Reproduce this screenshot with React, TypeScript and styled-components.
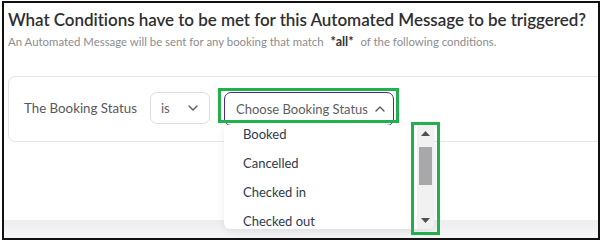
import React from "react";
import styled, { createGlobalStyle } from "styled-components";

const Global = createGlobalStyle`
  html, body { margin: 0; padding: 0; background: #ffffff; }
  body { font-family: "Lato", "Open Sans", sans-serif; }
  * { box-sizing: border-box; }
`;

const Frame = styled.div`
  position: relative;
  margin: 1px 0 0 2px;
  width: 598px;
  height: 239px;
  border: 2px solid #111;
  overflow: hidden;
  display: flex;
  flex-direction: column;
  background: #fff;
`;

const Header = styled.div`
  padding: 6px 0 0 4px;
  display: flex;
  flex-direction: column;
  gap: 4px;
`;

const Title = styled.h1`
  margin: 0;
  font-size: 17px;
  line-height: 22px;
  font-weight: 600;
  color: #2f2f33;
  white-space: nowrap;
  letter-spacing: -0.05px;
`;

const Subtitle = styled.p`
  margin: 0;
  font-size: 11.4px;
  line-height: 14px;
  color: #8c8c90;
  white-space: nowrap;
`;

const Strong = styled.b`
  color: #333;
  font-weight: 700;
  font-size: 12.5px;
  margin: 0 4px;
`;

const Card = styled.div`
  margin: 27px 0 0 4px;
  width: 640px;
  height: 66px;
  border: 1px solid #e6e6e8;
  border-radius: 7px;
  padding: 15px 0 0 15px;
  display: flex;
  align-items: flex-start;
`;

const Label = styled.span`
  font-size: 13.3px;
  line-height: 32px;
  color: #58585c;
  margin-right: 13px;
`;

const SelectBox = styled.div<{ $w: number; $active?: boolean }>`
  width: ${(p) => p.$w}px;
  height: ${(p) => (p.$active ? 34 : 32)}px;
  border: 1px solid ${(p) => (p.$active ? "#4b2a8c" : "#dedee2")};
  border-radius: 7px;
  display: flex;
  align-items: center;
  justify-content: space-between;
  padding: 0 ${(p) => (p.$active ? 8 : 11)}px 0 ${(p) => (p.$active ? 11 : 10)}px;
  font-size: 13px;
  color: #5e5e62;
  background: #fff;
`;

const SelectWrap = styled.div`
  position: relative;
  margin-left: 14px;
`;

const Menu = styled.div`
  position: absolute;
  top: 33px;
  left: 0;
  width: 210px;
  height: 104px;
  background: #fff;
  border-radius: 0 0 6px 6px;
  box-shadow: 0 3px 8px rgba(0, 0, 0, 0.08);
  overflow: hidden;
  z-index: 2;
`;

const List = styled.ul`
  list-style: none;
  margin: -5px 0 0 0;
  padding: 0;
`;

const Item = styled.li`
  height: 29px;
  line-height: 29px;
  padding-left: 19px;
  font-size: 13px;
  color: #2f3b4e;
`;

const Track = styled.div`
  position: absolute;
  top: 0;
  right: 0;
  width: 17px;
  height: 100%;
  background: #f1f1f2;
  display: flex;
  flex-direction: column;
  align-items: center;
`;

const ArrowBtn = styled.div`
  height: 17px;
  width: 17px;
  display: flex;
  align-items: center;
  justify-content: center;
`;

const Thumb = styled.div`
  margin-top: 5px;
  width: 13px;
  height: 38px;
  background: #a8a8aa;
`;

const Spacer = styled.div`
  flex: 1;
`;

const Band = styled.div`
  height: 18px;
  background: linear-gradient(#ededef, #f6f6f8);
`;

const Highlight = styled.div<{ $l: number; $t: number; $w: number; $h: number }>`
  position: absolute;
  left: ${(p) => p.$l}px;
  top: ${(p) => p.$t}px;
  width: ${(p) => p.$w}px;
  height: ${(p) => p.$h}px;
  border: 3px solid #21b04b;
  z-index: 5;
  pointer-events: none;
`;

const ChevronDown = () => (
  <svg width="10" height="6" viewBox="0 0 10 6" fill="none">
    <path d="M1 1l4 4 4-4" stroke="#5a5a5e" strokeWidth="1.4" strokeLinecap="round" strokeLinejoin="round" />
  </svg>
);

const ChevronUp = () => (
  <svg width="10" height="6" viewBox="0 0 10 6" fill="none">
    <path d="M1 5l4-4 4 4" stroke="#5a5a5e" strokeWidth="1.4" strokeLinecap="round" strokeLinejoin="round" />
  </svg>
);

const Tri = ({ up }: { up?: boolean }) => (
  <svg width="9" height="5" viewBox="0 0 9 5">
    <path d={up ? "M0 5L4.5 0L9 5Z" : "M0 0L4.5 5L9 0Z"} fill="#505054" />
  </svg>
);

export default function App() {
  const options = ["Booked", "Cancelled", "Checked in", "Checked out"];
  return (
    <>
      <Global />
      <Frame>
        <Header>
          <Title>What Conditions have to be met for this Automated Message to be triggered?</Title>
          <Subtitle>
            An Automated Message will be sent for any booking that match <Strong>*all*</Strong> of the following
            conditions.
          </Subtitle>
        </Header>
        <Card>
          <Label>The Booking Status</Label>
          <SelectBox $w={60}>
            <span>is</span>
            <ChevronDown />
          </SelectBox>
          <SelectWrap>
            <SelectBox $w={170} $active>
              <span>Choose Booking Status</span>
              <ChevronUp />
            </SelectBox>
            <Menu>
              <List>
                {options.map((o) => (
                  <Item key={o}>{o}</Item>
                ))}
              </List>
              <Track>
                <ArrowBtn>
                  <Tri up />
                </ArrowBtn>
                <Thumb />
                <Spacer />
                <ArrowBtn>
                  <Tri />
                </ArrowBtn>
              </Track>
            </Menu>
          </SelectWrap>
        </Card>
        <Spacer />
        <Band />
        <Highlight $l={214} $t={85} $w={181} $h={35} />
        <Highlight $l={407} $t={119} $w={29} $h={113} />
      </Frame>
    </>
  );
}
